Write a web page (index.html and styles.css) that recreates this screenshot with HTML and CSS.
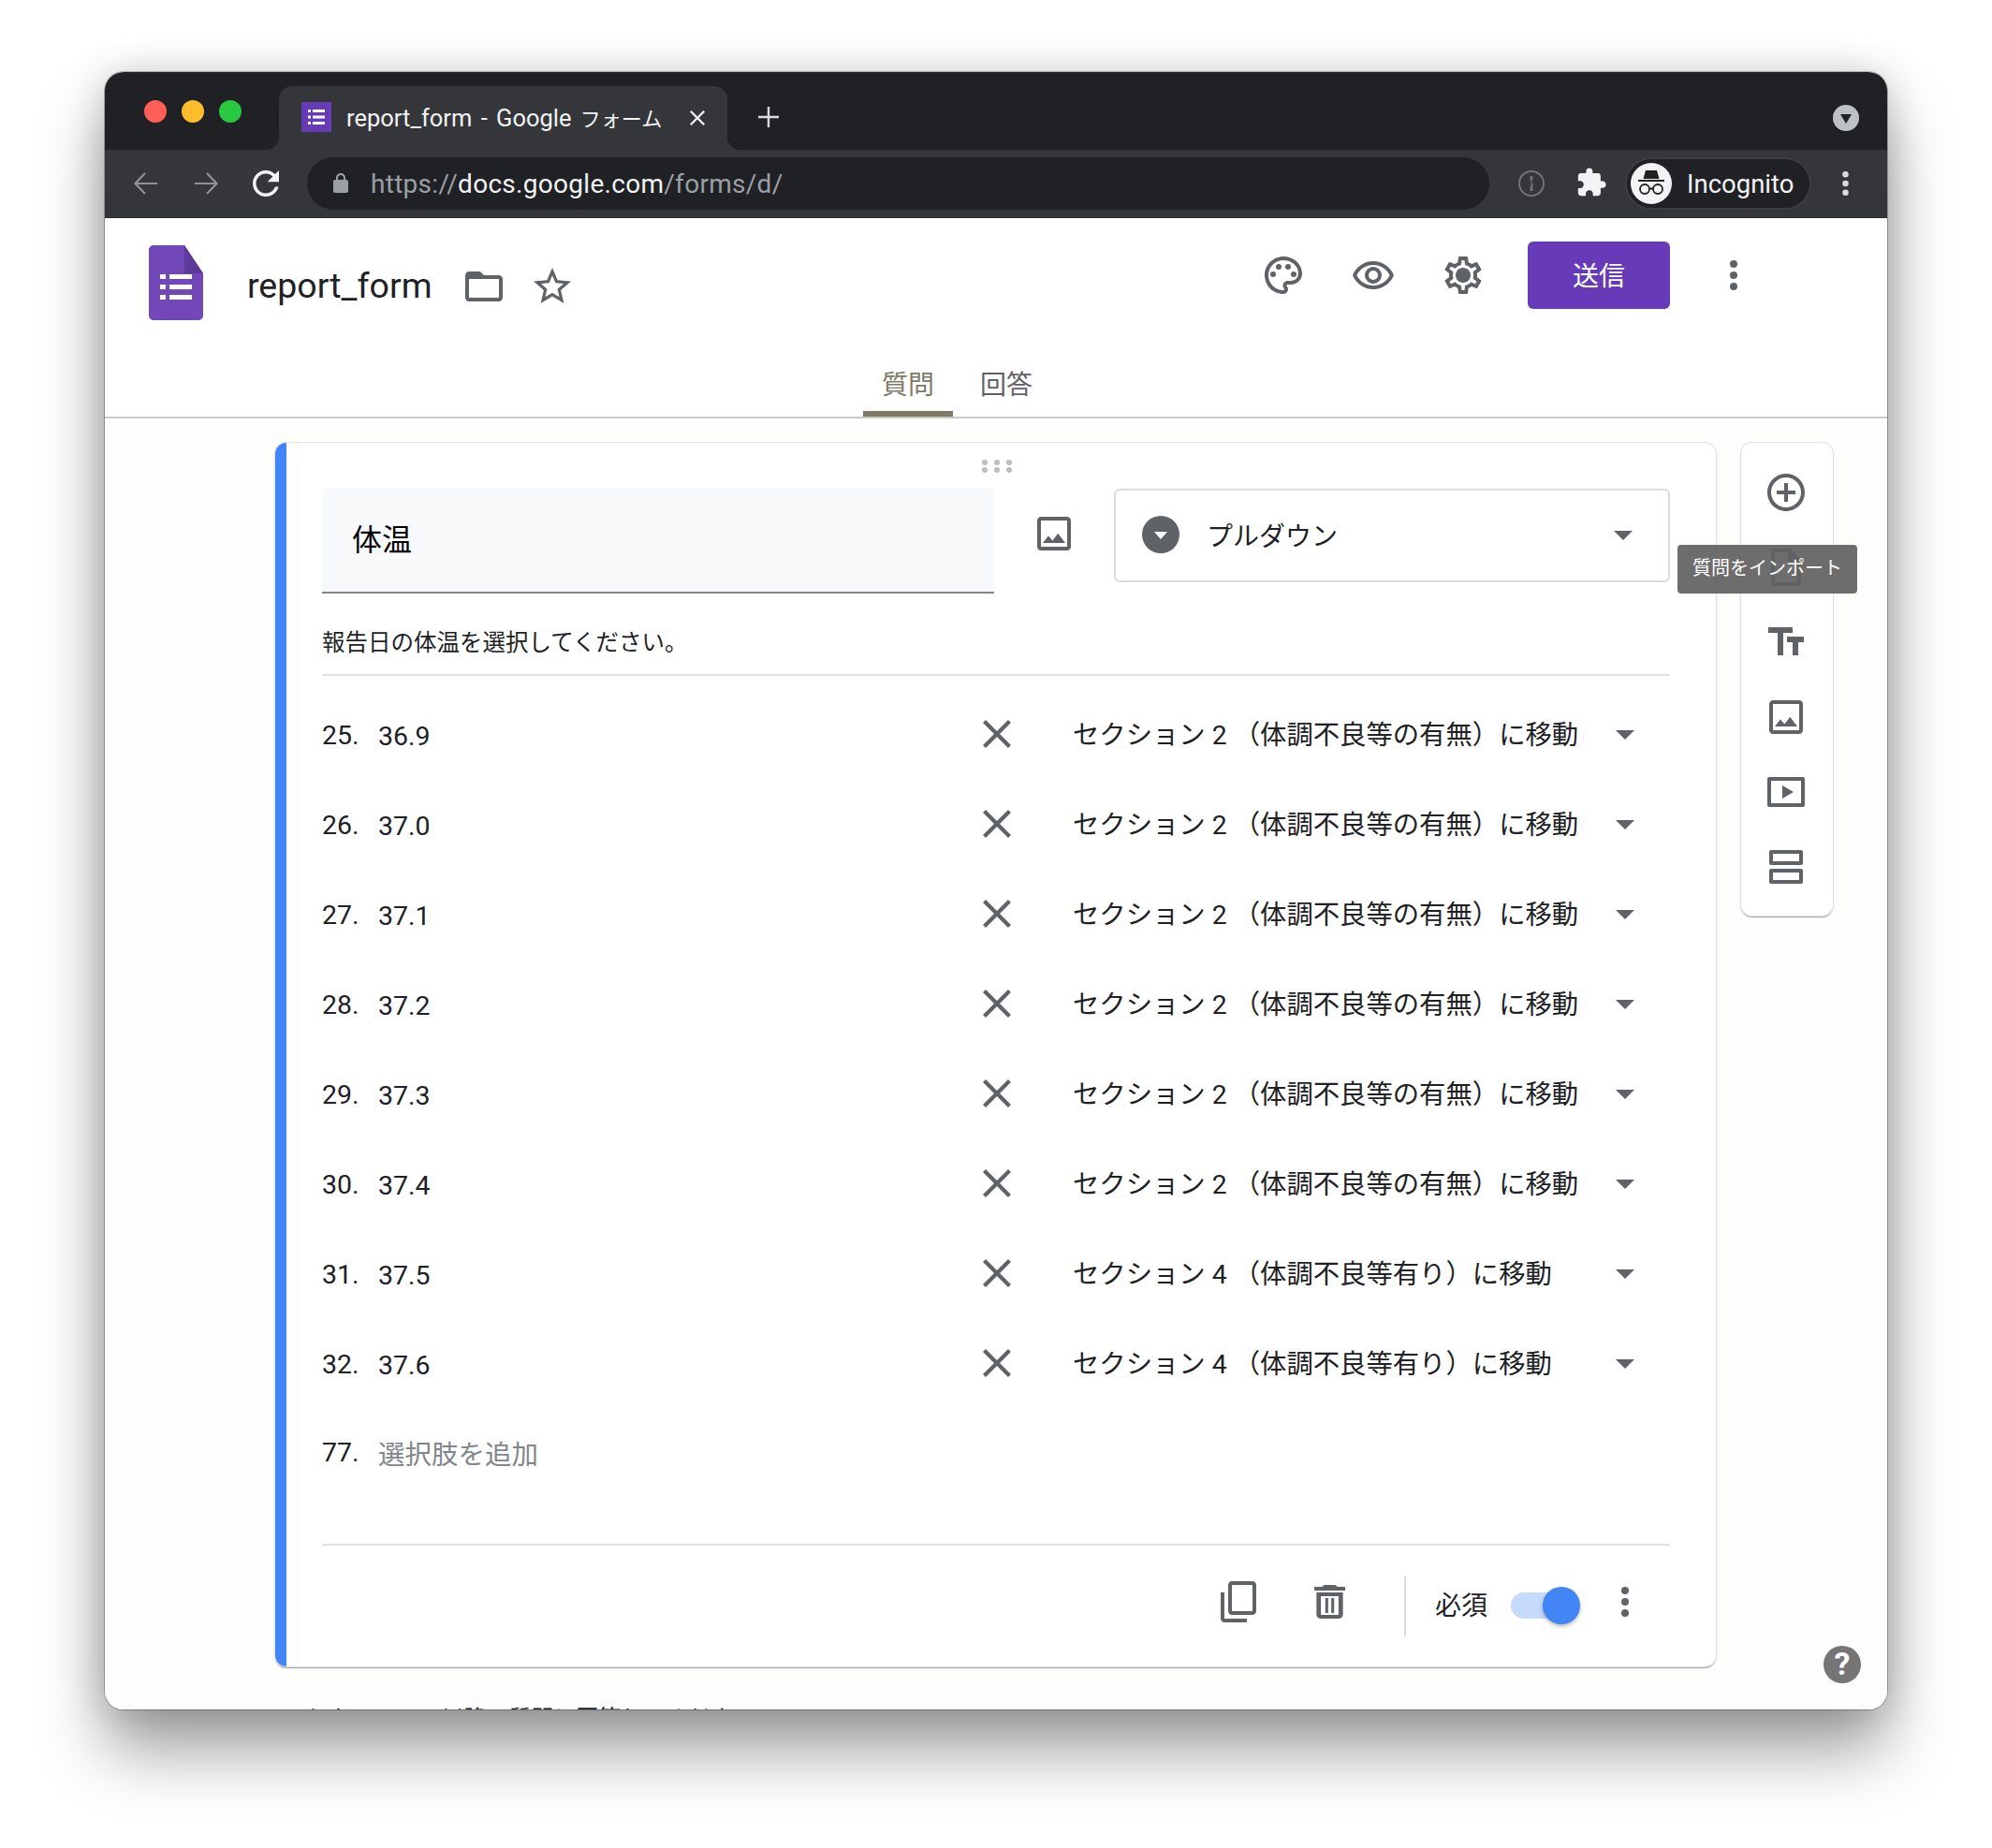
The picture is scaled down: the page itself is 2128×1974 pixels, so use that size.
FILE: index.html

```html
<!DOCTYPE html>
<html lang="ja">
<head>
<meta charset="UTF-8"/>
<title>report_form - Google フォーム</title>
<link rel="stylesheet" href="styles.css">
</head>
<body>
<svg class="defs" width="0" height="0">
	<symbol id="i-close" viewBox="5 5 14 14"><path d="M19 6.41L17.59 5 12 10.59 6.41 5 5 6.41 10.59 12 5 17.59 6.41 19 12 13.41 17.59 19 19 17.59 13.41 12z"/></symbol>
	<symbol id="i-image" viewBox="3 3 18 18"><path d="M19 5v14H5V5h14m0-2H5c-1.1 0-2 .9-2 2v14c0 1.1.9 2 2 2h14c1.1 0 2-.9 2-2V5c0-1.1-.9-2-2-2zm-4.86 8.86l-3 3.87L9 13.14 6 17h12l-3.86-5.14z"/></symbol>
	<symbol id="i-dots" viewBox="0 0 8 32"><circle cx="4" cy="4" r="4"/><circle cx="4" cy="16" r="4"/><circle cx="4" cy="28" r="4"/></symbol>
</svg>
<div class="window">

	<div class="tabstrip">
		<div class="lights"><span class="light red"></span><span class="light yellow"></span><span class="light green"></span></div>
		<div class="tab">
			<svg class="favicon" viewBox="0 0 32 32"><rect width="32" height="32" fill="#673ab7"/><path fill="#fff" d="M7 8h3v3H7zM12 8h13v3H12zM7 14.5h3v3H7zM12 14.5h13v3H12zM7 21h3v3H7zM12 21h13v3H12z"/></svg>
			<span class="tab-title">report_form - Google <span class="tab-cjk">フォーム</span></span>
			<svg class="tab-close"><use href="#i-close"/></svg>
		</div>
		<svg class="new-tab" viewBox="0 0 24 24"><path d="M10.8 1h2.4v9.8H23v2.4h-9.8V23h-2.4v-9.8H1v-2.4h9.8z"/></svg>
		<div class="strip-end"><svg viewBox="0 0 28 28"><circle cx="14" cy="14" r="14" fill="#bdc1c6"/><path d="M8 10h12l-6 10z" fill="#202124"/></svg></div>
	</div>

	<div class="toolbar">
		<svg class="nav-btn dim" viewBox="0 0 32 32"><path d="M28 16H5M15 5L4.5 16 15 27" fill="none" stroke="currentColor" stroke-width="2.2"/></svg>
		<svg class="nav-btn dim" viewBox="0 0 32 32"><path d="M4 16h23M17 5l10.500 11L17 27" fill="none" stroke="currentColor" stroke-width="2.2"/></svg>
		<svg class="nav-btn reload" viewBox="0 0 24 24"><path fill="currentColor" d="M17.65 6.35C16.2 4.9 14.21 4 12 4c-4.42 0-7.99 3.58-7.99 8s3.57 8 7.99 8c3.73 0 6.84-2.55 7.73-6h-2.08c-.82 2.33-3.04 4-5.65 4-3.31 0-6-2.69-6-6s2.69-6 6-6c1.66 0 3.14.69 4.22 1.78L13 11h7V4l-2.35 2.35z"/></svg>
		<div class="omnibox">
			<svg class="lock" viewBox="0 0 24 24"><path d="M18 8h-1V6c0-2.76-2.24-5-5-5S7 3.24 7 6v2H6c-1.1 0-2 .9-2 2v10c0 1.1.9 2 2 2h12c1.1 0 2-.9 2-2V10c0-1.1-.9-2-2-2zM9 6c0-1.66 1.34-3 3-3s3 1.34 3 3v2H9V6z"/></svg>
			<span class="url">https://<b>docs.google.com</b>/forms/d/</span>
		</div>
		<svg class="pw-icon" viewBox="0 0 28 28"><circle cx="14" cy="14" r="13" fill="none" stroke="#6f7276" stroke-width="2"/><path fill="#6f7276" d="M12.5 6h3v4h-1v4h1v8h-3v-5h1v-6h-1z"/></svg>
		<svg class="puzzle" viewBox="0 0 24 24"><path fill="#f1f3f4" d="M20.5 11H19V7c0-1.1-.9-2-2-2h-4V3.5C13 2.12 11.88 1 10.5 1S8 2.12 8 3.5V5H4c-1.1 0-1.99.9-1.99 2v3.8H3.5c1.49 0 2.7 1.21 2.7 2.7s-1.21 2.7-2.7 2.7H2V20c0 1.1.9 2 2 2h3.8v-1.5c0-1.49 1.21-2.7 2.7-2.7 1.49 0 2.7 1.21 2.7 2.7V22H17c1.1 0 2-.9 2-2v-4h1.5c1.38 0 2.5-1.12 2.5-2.5S21.88 11 20.5 11z"/></svg>
		<div class="incognito">
			<svg class="avatar" viewBox="0 0 44 44"><circle cx="22" cy="22" r="22" fill="#f1f3f4"/><path fill="#202124" d="M16 8h12l2.5 9h-17zM8 18h28v2H8z"/><g fill="none" stroke="#202124" stroke-width="1.8"><circle cx="15" cy="28" r="5"/><circle cx="29" cy="28" r="5"/><path d="M20 27.5h4"/></g></svg>
			<span>Incognito</span>
		</div>
		<svg class="chrome-menu"><use href="#i-dots"/></svg>
	</div>

	<header class="appbar">
		<div class="appbar-row">
			<div class="doc-info">
				<svg class="logo" viewBox="0 0 58 80"><path fill="#7248b9" d="M5 0h33l20 30v45c0 2.800-2.200 5-5 5H5c-2.800 0-5-2.200-5-5V5c0-2.800 2.200-5 5-5z"/><path fill="#5c3a9a" d="M38 0l20 30H38z"/><path fill="#fff" d="M12 31h6v5h-6zM22 31h24v5H22zM12 42h6v5h-6zM22 42h24v5H22zM12 53h6v5h-6zM22 53h24v5H22z"/></svg>
				<h1 class="doc-title">report_form</h1>
				<svg class="icon48 folder" viewBox="0 0 24 24"><path d="M20 6h-8l-2-2H4c-1.1 0-1.99.9-1.99 2L2 18c0 1.1.9 2 2 2h16c1.1 0 2-.9 2-2V8c0-1.1-.9-2-2-2zm0 12H4V8h16v10z"/></svg>
				<svg class="icon48 star" viewBox="0 0 24 24"><path d="M22 9.24l-7.19-.62L12 2 9.19 8.63 2 9.24l5.46 4.73L5.82 21 12 17.27 18.18 21l-1.63-7.03L22 9.24zM12 15.4l-3.76 2.27 1-4.28-3.32-2.88 4.38-.38L12 6.1l1.71 4.04 4.38.38-3.32 2.88 1 4.28L12 15.4z"/></svg>
			</div>
			<div class="doc-actions">
				<svg class="icon48" viewBox="0 0 24 24"><path d="M12 22C6.49 22 2 17.51 2 12S6.49 2 12 2s10 4.04 10 9c0 3.31-2.69 6-6 6h-1.77c-.28 0-.5.22-.5.5 0 .12.05.23.13.33.41.47.64 1.06.64 1.67 0 1.38-1.12 2.5-2.5 2.5zm0-18c-4.41 0-8 3.59-8 8s3.59 8 8 8c.28 0 .5-.22.5-.5 0-.16-.08-.28-.14-.35-.41-.46-.63-1.05-.63-1.65 0-1.38 1.12-2.5 2.5-2.5H16c2.21 0 4-1.79 4-4 0-3.86-3.59-7-8-7z"/><circle cx="6.5" cy="11.5" r="1.5"/><circle cx="9.5" cy="7.5" r="1.5"/><circle cx="14.5" cy="7.5" r="1.5"/><circle cx="17.5" cy="11.5" r="1.5"/></svg>
				<svg class="icon48" viewBox="0 0 24 24"><path fill-rule="evenodd" d="M12 6.5c3.8 0 7.2 2.1 8.8 5.5-1.6 3.4-5 5.5-8.8 5.5S4.8 15.4 3.2 12C4.8 8.600 8.2 6.5 12 6.5zm0-2C7 4.5 2.7 7.6 1 12c1.7 4.4 6 7.5 11 7.5s9.3-3.1 11-7.5c-1.7-4.4-6-7.5-11-7.5zm0 5a2.5 2.5 0 010 5 2.5 2.5 0 010-5zm0-2a4.5 4.5 0 100 9 4.5 4.5 0 000-9z"/></svg>
				<svg class="icon48" viewBox="0 0 24 24"><path d="M19.43 12.98c.04-.32.07-.64.07-.98 0-.34-.03-.66-.07-.98l2.11-1.65c.19-.15.24-.42.12-.64l-2-3.46c-.09-.16-.26-.25-.44-.25-.06 0-.12.01-.17.03l-2.49 1c-.52-.4-1.08-.73-1.69-.98l-.38-2.65C14.46 2.18 14.25 2 14 2h-4c-.25 0-.46.18-.49.42l-.38 2.65c-.61.25-1.17.59-1.69.98l-2.49-1c-.06-.02-.12-.03-.18-.03-.17 0-.34.09-.43.25l-2 3.46c-.13.22-.07.49.12.64l2.11 1.65c-.04.32-.07.65-.07.98 0 .33.03.66.07.98l-2.11 1.65c-.19.15-.24.42-.12.64l2 3.46c.09.16.26.25.44.25.06 0 .12-.01.17-.03l2.49-1c.52.4 1.08.73 1.69.98l.38 2.65c.03.24.24.42.49.42h4c.25 0 .46-.18.49-.42l.38-2.65c.61-.25 1.17-.59 1.69-.98l2.49 1c.06.02.12.03.18.03.17 0 .34-.09.43-.25l2-3.46c.12-.22.07-.49-.12-.64l-2.11-1.65zm-1.98-1.71c.04.31.05.52.05.73 0 .21-.02.43-.05.73l-.14 1.13.89.7 1.08.84-.7 1.21-1.27-.51-1.04-.42-.9.68c-.43.32-.84.56-1.25.73l-1.06.43-.16 1.13-.2 1.35h-1.4l-.19-1.35-.16-1.13-1.06-.43c-.43-.18-.83-.41-1.23-.71l-.91-.7-1.06.43-1.27.51-.7-1.21 1.08-.84.89-.7-.14-1.13c-.03-.31-.05-.54-.05-.74s.02-.43.05-.73l.14-1.13-.89-.7-1.08-.84.7-1.21 1.27.51 1.04.42.9-.68c.43-.32.84-.56 1.25-.73l1.06-.43.16-1.13.2-1.35h1.39l.19 1.35.16 1.13 1.06.43c.43.18.83.41 1.23.71l.91.7 1.06-.43 1.27-.51.7 1.21-1.07.85-.89.7.14 1.13zM12 8c-2.21 0-4 1.79-4 4s1.79 4 4 4 4-1.79 4-4-1.79-4-4-4z"/></svg>
				<button class="send-btn">送信</button>
				<svg class="more-btn"><use href="#i-dots"/></svg>
			</div>
		</div>
		<nav class="form-tabs">
			<a class="form-tab active">質問</a>
			<a class="form-tab">回答</a>
		</nav>
	</header>

	<main class="main">
		<div class="main-row">
			<section class="card">
				<div class="drag"><svg viewBox="0 0 32 14" width="32" height="14"><g fill="#bdbdbd"><circle cx="3" cy="3" r="3"/><circle cx="16" cy="3" r="3"/><circle cx="29" cy="3" r="3"/><circle cx="3" cy="11" r="3"/><circle cx="16" cy="11" r="3"/><circle cx="29" cy="11" r="3"/></g></svg></div>
				<div class="q-head">
					<div class="q-title">体温</div>
					<svg class="q-image"><use href="#i-image"/></svg>
					<div class="q-type">
						<svg class="type-icon" viewBox="0 0 40 40"><circle cx="20" cy="20" r="20" fill="#5f6368"/><path d="M13 17h14l-7 8z" fill="#fff"/></svg>
						<span>プルダウン</span>
						<i class="caret"></i>
					</div>
				</div>
				<p class="q-desc">報告日の体温を選択してください。</p>
				<div class="options">
					<div class="option"><span class="num">25.</span><span class="val">36.9</span><svg class="remove"><use href="#i-close"/></svg><span class="jump">セクション 2 （体調不良等の有無）に移動</span><i class="caret"></i></div>
					<div class="option"><span class="num">26.</span><span class="val">37.0</span><svg class="remove"><use href="#i-close"/></svg><span class="jump">セクション 2 （体調不良等の有無）に移動</span><i class="caret"></i></div>
					<div class="option"><span class="num">27.</span><span class="val">37.1</span><svg class="remove"><use href="#i-close"/></svg><span class="jump">セクション 2 （体調不良等の有無）に移動</span><i class="caret"></i></div>
					<div class="option"><span class="num">28.</span><span class="val">37.2</span><svg class="remove"><use href="#i-close"/></svg><span class="jump">セクション 2 （体調不良等の有無）に移動</span><i class="caret"></i></div>
					<div class="option"><span class="num">29.</span><span class="val">37.3</span><svg class="remove"><use href="#i-close"/></svg><span class="jump">セクション 2 （体調不良等の有無）に移動</span><i class="caret"></i></div>
					<div class="option"><span class="num">30.</span><span class="val">37.4</span><svg class="remove"><use href="#i-close"/></svg><span class="jump">セクション 2 （体調不良等の有無）に移動</span><i class="caret"></i></div>
					<div class="option"><span class="num">31.</span><span class="val">37.5</span><svg class="remove"><use href="#i-close"/></svg><span class="jump">セクション 4 （体調不良等有り）に移動</span><i class="caret"></i></div>
					<div class="option"><span class="num">32.</span><span class="val">37.6</span><svg class="remove"><use href="#i-close"/></svg><span class="jump">セクション 4 （体調不良等有り）に移動</span><i class="caret"></i></div>
					<div class="option last"><span class="num">77.</span><span class="val add">選択肢を追加</span></div>
				</div>
				<div class="q-foot">
					<svg class="foot-copy" viewBox="2 1 19 22"><path transform="matrix(1 0 0 -1 0 24)" d="M16 1H4c-1.1 0-2 .9-2 2v14h2V3h12V1zm3 4H8c-1.1 0-2 .9-2 2v14c0 1.1.9 2 2 2h11c1.1 0 2-.9 2-2V7c0-1.1-.9-2-2-2zm0 16H8V7h11v14z"/></svg>
					<svg class="foot-trash" viewBox="5 3 14 18" preserveAspectRatio="none"><path d="M6 19c0 1.1.9 2 2 2h8c1.1 0 2-.9 2-2V7H6v12zm2-10h8v10H8V9zm7.5-5l-1-1h-5l-1 1H5v2h14V4h-3.5zM10 10h1.3v8H10zM12.7 10H14v8h-1.3z"/></svg>
					<div class="foot-sep"></div>
					<span class="foot-label">必須</span>
					<div class="toggle"><span class="toggle-thumb"></span></div>
					<svg class="foot-more"><use href="#i-dots"/></svg>
				</div>
			</section>

			<aside class="side">
				<svg class="side-icon" viewBox="0 0 24 24"><path d="M13 7h-2v4H7v2h4v4h2v-4h4v-2h-4V7zm-1-5C6.48 2 2 6.48 2 12s4.48 10 10 10 10-4.48 10-10S17.52 2 12 2zm0 18c-4.41 0-8-3.59-8-8s3.59-8 8-8 8 3.59 8 8-3.59 8-8 8z"/></svg>
				<svg class="side-icon" viewBox="0 0 24 24"><path d="M14 2H6c-1.1 0-2 .9-2 2v16c0 1.1.9 2 2 2h12c1.1 0 2-.9 2-2V8l-6-6zm4 18H6V4h7v5h5v11z"/></svg>
				<svg class="side-icon" viewBox="0 0 24 24"><path d="M2.5 4v3h5v12h3V7h5V4h-13zm19 5h-9v3h3v7h3v-7h3V9z"/></svg>
				<svg class="side-icon" viewBox="0 0 24 24"><path d="M19 5v14H5V5h14m0-2H5c-1.1 0-2 .9-2 2v14c0 1.1.9 2 2 2h14c1.1 0 2-.9 2-2V5c0-1.1-.9-2-2-2zm-4.86 8.86l-3 3.87L9 13.14 6 17h12l-3.86-5.14z"/></svg>
				<svg class="side-icon" viewBox="0 0 24 24"><path d="M3 4h18c.6 0 1 .4 1 1v14c0 .6-.4 1-1 1H3c-.6 0-1-.4-1-1V5c0-.6.4-1 1-1zm1 2v12h16V6H4zm6 2.5l6 3.5-6 3.5z"/></svg>
				<svg class="side-icon" viewBox="0 0 24 24"><path d="M4 3h16c.6 0 1 .4 1 1v6c0 .6-.4 1-1 1H4c-.6 0-1-.4-1-1V4c0-.6.4-1 1-1zm1 2v4h14V5H5zM4 13h16c.6 0 1 .4 1 1v6c0 .6-.4 1-1 1H4c-.6 0-1-.4-1-1v-6c0-.6.4-1 1-1zm1 2v4h14v-4H5z"/></svg>
				<div class="tooltip">質問をインポート</div>
			</aside>
		</div>
		<p class="next-text">セクション 2 以降の質問に回答してください</p>
		<svg class="help" viewBox="0 0 40 40"><circle cx="20" cy="20" r="20" fill="#757575"/><text x="20" y="31" text-anchor="middle">?</text></svg>
	</main>

</div>
</body>
</html>
```

FILE: styles.css

```css
* {
	box-sizing: border-box;
}

html, body {
	margin: 0;
	background: #fff;
}

body {
	width: 2128px;
	height: 1974px;
	padding: 77px 112px 0;
	overflow: hidden;
	font-family: Roboto, "Noto Sans CJK JP", sans-serif;
	color: #202124;
}

.defs {
	position: absolute;
}

.window {
	width: 1904px;
	height: 1749px;
	border-radius: 20px;
	overflow: hidden;
	display: flex;
	flex-direction: column;
	background: #fdfdfb;
	box-shadow: 0 0 0 1px rgba(0,0,0,.25), 0 44px 70px rgba(0,0,0,.38), 0 0 40px rgba(0,0,0,.18);
}

/* browser chrome */
.tabstrip {
	height: 83px;
	flex: none;
	display: flex;
	align-items: flex-end;
	background: #202124;
}

.lights {
	display: flex;
	gap: 16px;
	padding: 0 0 29px 42px;
	width: 186px;
}

.light {
	width: 24px;
	height: 24px;
	border-radius: 50%;
}

.red { background: #ff5f57; }
.yellow { background: #ffbd2e; }
.green { background: #28c840; }

.tab {
	position: relative;
	width: 479px;
	height: 68px;
	display: flex;
	align-items: center;
	padding: 0 0 0 24px;
	background: #35363a;
	border-radius: 14px 14px 0 0;
	color: #f1f3f4;
}

.tab::before, .tab::after {
	content: "";
	position: absolute;
	bottom: 0;
	width: 14px;
	height: 14px;
}

.tab::before {
	left: -14px;
	background: radial-gradient(circle at 0 0, #202124 14px, #35363a 14.5px);
}

.tab::after {
	right: -14px;
	background: radial-gradient(circle at 100% 0, #202124 14px, #35363a 14.5px);
}

.favicon {
	width: 32px;
	height: 32px;
	margin-bottom: 2px;
}

.tab-title {
	width: 367px;
	margin: 0 0 3px 16px;
	font-size: 25.5px;
	word-spacing: 3px;
	white-space: nowrap;
}

.tab-cjk {
	font-size: 22px;
}

.tab-close {
	width: 16px;
	height: 16px;
	fill: #f1f3f4;
}

.new-tab {
	width: 24px;
	height: 24px;
	margin: 0 0 23px 32px;
	fill: #dadce0;
}

.strip-end {
	margin-left: auto;
	padding: 0 30px 20px 0;
	line-height: 0;
}

.strip-end svg {
	width: 28px;
	height: 28px;
}

.toolbar {
	height: 73px;
	flex: none;
	display: flex;
	align-items: flex-start;
	padding: 8px 0 0 28px;
	background: #35363a;
	border-bottom: 1px solid #2a2b2e;
}

.nav-btn {
	width: 32px;
	height: 32px;
	margin: 12px 32px 0 0;
	color: #f1f3f4;
}

.nav-btn.dim {
	color: #8f9397;
}

.nav-btn.reload {
	width: 42px;
	height: 42px;
	margin: 7px 27px 0 -5px;
}

.omnibox {
	width: 1263px;
	height: 56px;
	margin-left: -4px;
	display: flex;
	align-items: center;
	padding-left: 24px;
	border-radius: 28px;
	background: #202124;
}

.lock {
	width: 24px;
	height: 24px;
	fill: #9aa0a6;
}

.url {
	margin-left: 20px;
	font-size: 28px;
	letter-spacing: .29px;
	color: #9aa0a6;
	white-space: nowrap;
}

.url b {
	font-weight: 400;
	color: #f1f3f4;
}

.pw-icon {
	width: 28px;
	height: 28px;
	margin: 14px 0 0 31px;
}

.puzzle {
	width: 34px;
	height: 34px;
	margin: 10px 0 0 33px;
}

.incognito {
	width: 199px;
	height: 56px;
	margin-left: 19px;
	display: flex;
	align-items: center;
	padding-left: 4px;
	border-radius: 28px;
	border: 2px solid #3c3d41;
	background: #202124;
	color: #f1f3f4;
	font-size: 27.5px;
}

.avatar {
	width: 44px;
	height: 44px;
	margin-right: 16px;
}

.chrome-menu {
	width: 7px;
	height: 26px;
	margin: 15px 0 0 33px;
	fill: #dadce0;
}

/* form header */
.appbar {
	height: 214px;
	flex: none;
	display: flex;
	flex-direction: column;
	justify-content: space-between;
	background: #fff;
	border-bottom: 2px solid #c9c9c9;
}

.appbar-row {
	display: flex;
	justify-content: space-between;
}

.doc-info {
	display: flex;
	align-items: center;
	padding: 29px 0 0 47px;
}

.logo {
	width: 58px;
	height: 80px;
}

.doc-title {
	margin: 6px 0 0 47px;
	font-size: 37.5px;
	font-weight: 400;
	line-height: 48px;
}

.icon48 {
	width: 48px;
	height: 48px;
	fill: #5f6368;
	flex: none;
}

.folder {
	margin: 8px 0 0 31px;
}

.star {
	margin: 8px 0 0 25px;
}

.doc-actions {
	display: flex;
	align-items: center;
	gap: 48px;
	padding: 25px 160px 0 0;
	height: 97px;
}

.doc-actions .icon48 + .send-btn {
	margin-left: -3px;
}

.send-btn {
	width: 152px;
	height: 72px;
	padding: 0 0 3px;
	border: 0;
	border-radius: 6px;
	background: #673ab7;
	color: #fff;
	font-family: inherit;
	font-size: 28px;
}

.more-btn {
	width: 8px;
	height: 32px;
	margin-left: 16px;
	fill: #5f6368;
}

.form-tabs {
	display: flex;
	gap: 9px;
	padding-left: 810px;
}

.form-tab {
	width: 96px;
	height: 48px;
	text-align: center;
	font-size: 28px;
	line-height: 30px;
	color: #5f6368;
}

.form-tab.active {
	color: #7f7a66;
	border-bottom: 6px solid #7f7a66;
	border-radius: 6px 6px 0 0;
}

/* form body */
.main {
	position: relative;
	flex: 1;
	min-height: 0;
	overflow: hidden;
	padding: 26px 0 0 182px;
	background: #fdfdfb;
}

.main-row {
	display: flex;
	align-items: flex-start;
	gap: 27px;
}

.card {
	width: 1539px;
	height: 1307px;
	flex: none;
	padding: 0 49px 0 38px;
	background: #fff;
	border-left: 12px solid #4285f4;
	border-radius: 12px;
	box-shadow: 0 0 0 1px #e2e2e4, 0 2px 1px rgba(0,0,0,.3), 0 1px 3px rgba(0,0,0,.2);
}

.drag {
	height: 49px;
	padding: 18px 0 0 705px;
	line-height: 0;
}

.q-head {
	display: flex;
	align-items: flex-start;
}

.q-title {
	width: 718px;
	height: 112px;
	padding: 31px 0 0 32px;
	background: #f8f9fa;
	border-bottom: 2px solid #80868b;
	border-radius: 6px 6px 0 0;
	font-size: 32px;
	line-height: 48px;
	color: #000;
}

.q-image {
	width: 36px;
	height: 36px;
	margin: 30px 46px 0 46px;
	fill: #5f6368;
}

.q-type {
	width: 594px;
	height: 100px;
	display: flex;
	align-items: center;
	padding: 0 38px 2px 28px;
	border: 2px solid #dadce0;
	border-radius: 6px;
	font-size: 28px;
}

.type-icon {
	width: 40px;
	height: 40px;
	margin-right: 29px;
}

.q-type .caret {
	margin: 2px 0 0 auto;
}

.caret {
	display: block;
	width: 0;
	height: 0;
	border-left: 10px solid transparent;
	border-right: 10px solid transparent;
	border-top: 10px solid #5f6368;
}

.q-desc {
	margin: 0;
	padding: 35px 0 15px;
	font-size: 24.5px;
	line-height: 36px;
	border-bottom: 2px solid #e0e0e0;
}

.options {
	padding-top: 15px;
}

.option {
	height: 96px;
	display: grid;
	grid-template-columns: 60px 641px 40px 631px 40px;
	align-items: center;
	font-size: 28.5px;
}

.option.last {
	padding-bottom: 3px;
}

.val {
	padding-top: 3px;
}

.add {
	color: #80868b;
	padding-top: 0;
}

.remove {
	width: 30px;
	height: 30px;
	margin-bottom: 2px;
	justify-self: center;
	fill: #5f6368;
}

.jump {
	padding: 0 0 5px 61px;
	font-size: 28.35px;
	white-space: nowrap;
}

.option .caret {
	justify-self: center;
}

.q-foot {
	height: 131px;
	margin-top: 48px;
	display: flex;
	align-items: center;
	border-top: 2px solid #e0e0e0;
}

.foot-copy {
	width: 38px;
	height: 44px;
	margin: 0 0 10px 960px;
	fill: #5f6368;
}

.foot-trash {
	width: 33px;
	height: 36px;
	margin: 0 0 9px 62px;
	fill: #5f6368;
}

.foot-sep {
	width: 2px;
	height: 64px;
	margin-left: 63px;
	background: #dadce0;
}

.foot-label {
	margin-left: 31px;
	font-size: 28px;
	line-height: 40px;
}

.toggle {
	position: relative;
	width: 54px;
	height: 28px;
	margin: 0 0 2px 25px;
	border-radius: 14px 0 0 14px;
	background: #c6dafc;
}

.toggle-thumb {
	position: absolute;
	top: -6px;
	left: 34px;
	width: 40px;
	height: 40px;
	border-radius: 50%;
	background: #4285f4;
	box-shadow: 0 2px 4px rgba(0,0,0,.3);
}

.foot-more {
	width: 8px;
	height: 32px;
	margin: 0 0 10px 64px;
	fill: #5f6368;
}

.side {
	position: relative;
	width: 98px;
	height: 505px;
	flex: none;
	display: flex;
	flex-direction: column;
	align-items: center;
	padding: 13px 2px 0 0;
	background: #fff;
	border-radius: 12px;
	box-shadow: 0 0 0 1px #e2e2e4, 0 2px 1px rgba(0,0,0,.3), 0 1px 3px rgba(0,0,0,.2);
}

.side-icon {
	width: 48px;
	height: 48px;
	margin: 16px 0;
	flex: none;
	fill: #5f6368;
}

.tooltip {
	position: absolute;
	left: -68px;
	top: 109px;
	width: 192px;
	height: 52px;
	border-radius: 4px;
	background: rgba(97,97,97,.92);
	color: #fff;
	font-size: 20px;
	line-height: 50px;
	text-align: center;
	white-space: nowrap;
}

.next-text {
	margin: 38px 0 0 32px;
	font-size: 24px;
	line-height: 36px;
	white-space: nowrap;
}

.help {
	position: absolute;
	right: 28px;
	bottom: 28px;
	width: 40px;
	height: 40px;
}

.help text {
	font-size: 34px;
	font-weight: 700;
	fill: #fff;
}
```
